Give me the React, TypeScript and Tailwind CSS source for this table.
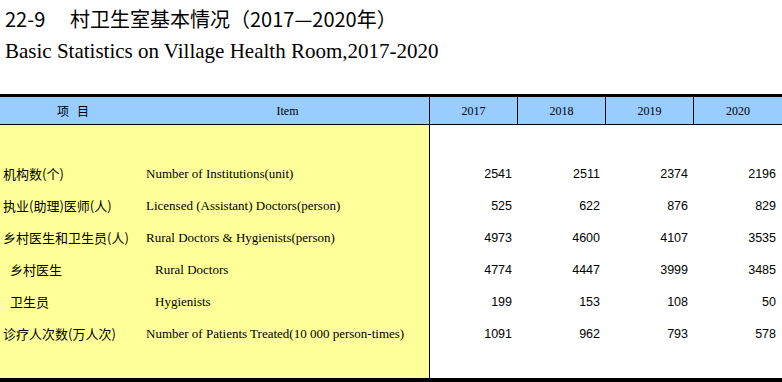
const cjk = "font-['Noto_Sans_CJK_SC',sans-serif]";
const serif = "font-['Liberation_Serif','Noto_Sans_CJK_SC',serif]";
const sans = "font-['Liberation_Sans',Arial,sans-serif]";

const years = ["2017", "2018", "2019", "2020"];

const rows = [
	{ zh: "机构数(个)", en: "Number of Institutions(unit)", values: ["2541", "2511", "2374", "2196"] },
	{ zh: "执业(助理)医师(人)", en: "Licensed (Assistant) Doctors(person)", values: ["525", "622", "876", "829"] },
	{ zh: "乡村医生和卫生员(人)", en: "Rural Doctors & Hygienists(person)", values: ["4973", "4600", "4107", "3535"] },
	{ zh: "乡村医生", en: "Rural Doctors", values: ["4774", "4447", "3999", "3485"], indent: true },
	{ zh: "卫生员", en: "Hygienists", values: ["199", "153", "108", "50"], indent: true },
	{ zh: "诊疗人次数(万人次)", en: "Number of Patients Treated(10 000 person-times)", values: ["1091", "962", "793", "578"] },
];

export default function App() {
	return (
		<div className="w-[782px] h-[382px] overflow-hidden bg-white text-black">
			<div className="pt-[7px] pl-[5px]">
				<div className={`flex items-center h-[24px] text-[20px] leading-none ${cjk}`}>
					<span className="w-[65px]">22-9</span>
					<span>村卫生室基本情况（2017—2020年）</span>
				</div>
				<div className="mt-[6px] h-[28px] text-[21px] leading-[28px] font-['Liberation_Serif',serif]">
					Basic Statistics on Village Health Room,2017-2020
				</div>
			</div>

			<div className="mt-[29px] border-t-[3px] border-black">
				<div className="flex h-[28px] bg-[#99ccff] border-b border-black text-[12px]">
					<div className="flex w-[429px] items-center">
						<span className={`w-[146px] text-center ${cjk}`}>项&nbsp;&nbsp;&nbsp;目</span>
						<span className={`flex-1 text-center ${serif}`}>Item</span>
					</div>
					{years.map((y, i) => (
						<div
							className={`flex items-center justify-center border-l border-black ${serif} ${i === 3 ? "flex-1" : "w-[88px]"}`}
							key={y}
						>
							{y}
						</div>
					))}
				</div>

				<div className="flex h-[253px]">
					<div className="w-[429px] bg-[#ffff99] pt-[33px]">
						{rows.map((r) => (
							<div className="flex h-[32px] items-center" key={r.zh}>
								<span className={`w-[146px] text-[13px] ${serif} ${r.indent ? "pl-[10px]" : "pl-[3px]"}`}>
									<span className={cjk}>{r.zh}</span>
								</span>
								<span className={`text-[13px] ${serif} ${r.indent ? "pl-[9px]" : ""}`}>{r.en}</span>
							</div>
						))}
					</div>
					<div className="flex-1 border-l border-black pt-[33px]">
						{rows.map((r) => (
							<div className={`flex h-[32px] items-center text-[12.5px] ${sans}`} key={r.zh}>
								{r.values.map((v, i) => (
									<span className={`pr-[6px] text-right ${i === 3 ? "flex-1" : "w-[88px]"}`} key={i}>
										{v}
									</span>
								))}
							</div>
						))}
					</div>
				</div>
				<div className="h-[4px] bg-black" />
			</div>
		</div>
	);
}
